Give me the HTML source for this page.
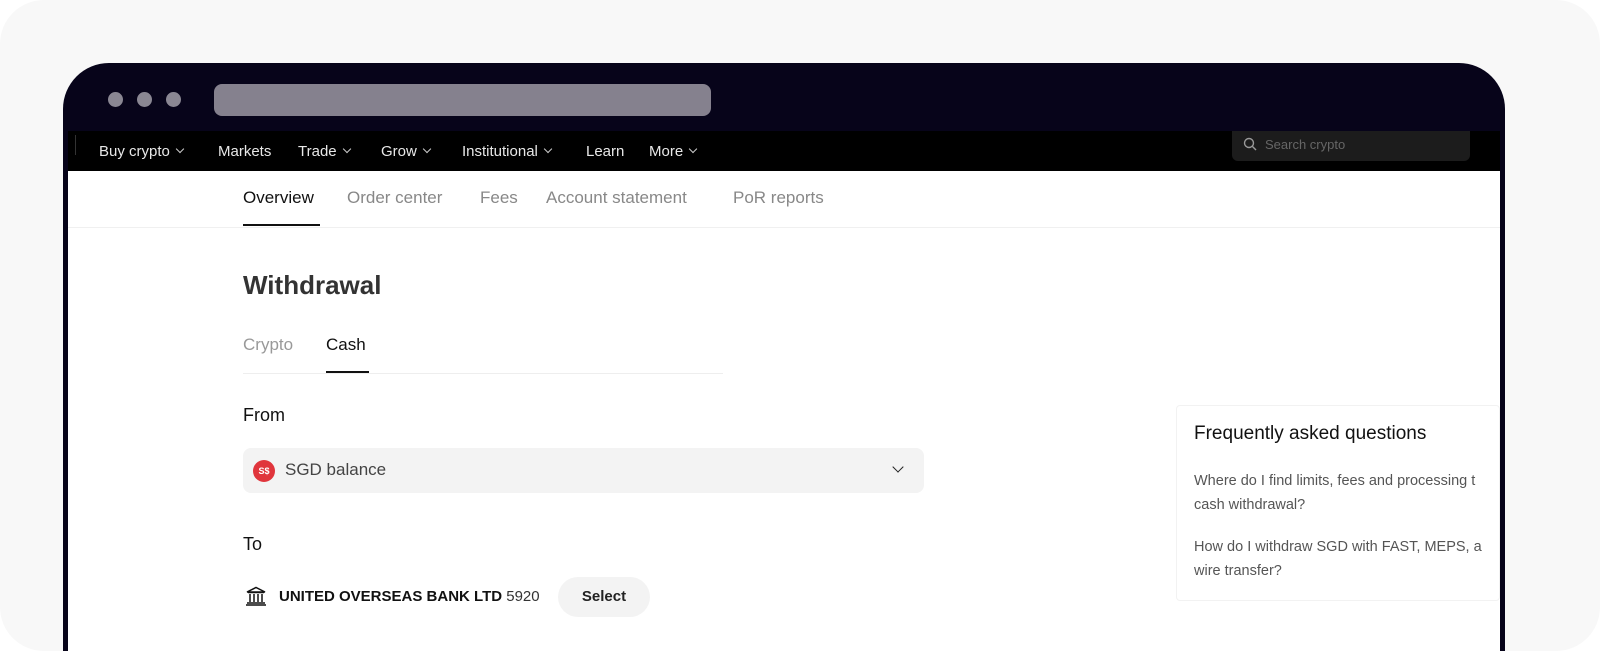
<!DOCTYPE html>
<html><head><style>
*{margin:0;padding:0;box-sizing:border-box}
body{width:1600px;height:664px;overflow:hidden;background:#fff;font-family:"Liberation Sans",sans-serif;position:relative}
.card{position:absolute;left:0;top:0;width:1600px;height:651px;background:#f8f8f8;border-radius:44px;overflow:hidden}
.frame{position:absolute;left:63px;top:63px;width:1442px;height:588px;background:#07041a;border-radius:46px 46px 0 0}
.dot{position:absolute;top:92px;width:15px;height:15px;border-radius:50%;background:#8a8793}
.url{position:absolute;left:214px;top:84px;width:497px;height:32px;border-radius:8px;background:#85818e}
.nav{position:absolute;left:68px;top:131px;width:1432px;height:40px;background:#000;color:#e8e8e8;font-size:15px}
.nav span{position:absolute;top:12px}
.content{position:absolute;left:68px;top:171px;width:1432px;height:480px;background:#fff}
.a{position:absolute;white-space:nowrap}
.chev{display:inline-block;width:6px;height:6px;border-right:1.3px solid #ccc;border-bottom:1.3px solid #ccc;transform:rotate(45deg);margin-left:7px;position:relative;top:-4px}
</style></head><body>
<div class="card">
<div class="frame"></div>
<div class="dot" style="left:108px"></div><div class="dot" style="left:137px"></div><div class="dot" style="left:166px"></div>
<div class="url"></div>
<div class="nav">
<div style="position:absolute;left:7px;top:4px;width:1px;height:20px;background:#333"></div>
<span style="left:31px">Buy crypto<i class="chev"></i></span>
<span style="left:150px">Markets</span>
<span style="left:230px">Trade<i class="chev"></i></span>
<span style="left:313px">Grow<i class="chev"></i></span>
<span style="left:394px">Institutional<i class="chev"></i></span>
<span style="left:518px">Learn</span>
<span style="left:581px">More<i class="chev"></i></span>
<div style="position:absolute;left:1164px;top:0;width:238px;height:30px;background:#1c1c1c;border-radius:0 0 6px 6px">
<svg style="position:absolute;left:11px;top:6px" width="14" height="14" viewBox="0 0 14 14"><circle cx="6" cy="6" r="4.5" fill="none" stroke="#999" stroke-width="1.4"/><path d="M9.5 9.5L13 13" stroke="#999" stroke-width="1.4"/></svg>
<span style="left:33px;top:6px;font-size:13px;color:#666">Search crypto</span></div>
</div>
<div class="content">
<div class="a" style="left:175px;top:17px;font-size:17px;color:#111">Overview</div>
<div class="a" style="left:175px;top:53px;width:77px;height:2px;background:#111"></div>
<div class="a" style="left:279px;top:17px;font-size:17px;color:#888">Order center</div>
<div class="a" style="left:412px;top:17px;font-size:17px;color:#888">Fees</div>
<div class="a" style="left:478px;top:17px;font-size:17px;color:#888">Account statement</div>
<div class="a" style="left:665px;top:17px;font-size:17px;color:#888">PoR reports</div>
<div class="a" style="left:0;top:56px;width:1432px;height:1px;background:#f0f0f0"></div>
<div class="a" style="left:175px;top:99px;font-size:26px;font-weight:bold;color:#333">Withdrawal</div>
<div class="a" style="left:175px;top:164px;font-size:17px;color:#999">Crypto</div>
<div class="a" style="left:258px;top:164px;font-size:17px;color:#111">Cash</div>
<div class="a" style="left:175px;top:202px;width:480px;height:1px;background:#eee"></div>
<div class="a" style="left:258px;top:200px;width:43px;height:2px;background:#111"></div>
<div class="a" style="left:175px;top:234px;font-size:18px;color:#111">From</div>
<div class="a" style="left:175px;top:277px;width:681px;height:45px;background:#f3f3f3;border-radius:8px">
<div class="a" style="left:10px;top:12px;width:22px;height:22px;border-radius:50%;background:#e0353c;color:#fff;font-size:9px;font-weight:bold;text-align:center;line-height:22px">S$</div>
<div class="a" style="left:42px;top:12px;font-size:17px;color:#444">SGD balance</div>
<div class="a" style="left:651px;top:15px;width:8px;height:8px;border-right:1.6px solid #222;border-bottom:1.6px solid #222;transform:rotate(45deg)"></div>
</div>
<div class="a" style="left:175px;top:363px;font-size:18px;color:#111">To</div>
<svg class="a" style="left:177px;top:415px" width="22" height="20" viewBox="0 0 22 20"><path d="M2 6L11 1.5L20 6Z M3 6.5H19 M5 8v8 M9 8v8 M13 8v8 M17 8v8 M2 17h18 M1 19h20" fill="none" stroke="#111" stroke-width="1.5"/></svg>
<div class="a" style="left:211px;top:417px;font-size:15px;color:#111"><b>UNITED OVERSEAS BANK LTD</b> <span style="color:#333">5920</span></div>
<div class="a" style="left:490px;top:406px;width:92px;height:40px;border-radius:20px;background:#f3f3f3;font-size:15px;font-weight:bold;color:#222;text-align:center;line-height:40px">Select</div>
<div class="a" style="left:1108px;top:234px;width:324px;height:196px;border:1px solid #f2f2f2;border-radius:4px"></div>
<div class="a" style="left:1126px;top:252px;font-size:19px;color:#111">Frequently asked questions</div>
<div class="a" style="left:1126px;top:298px;font-size:14.5px;color:#555;line-height:24px">Where do I find limits, fees and processing t<br>cash withdrawal?</div>
<div class="a" style="left:1126px;top:364px;font-size:14.5px;color:#555;line-height:24px">How do I withdraw SGD with FAST, MEPS, a<br>wire transfer?</div>
</div>
<div style="position:absolute;left:1500px;top:131px;width:5px;height:520px;background:#07041a"></div>
<div style="position:absolute;left:63px;top:131px;width:5px;height:520px;background:#07041a"></div>
</div>
</body></html>
